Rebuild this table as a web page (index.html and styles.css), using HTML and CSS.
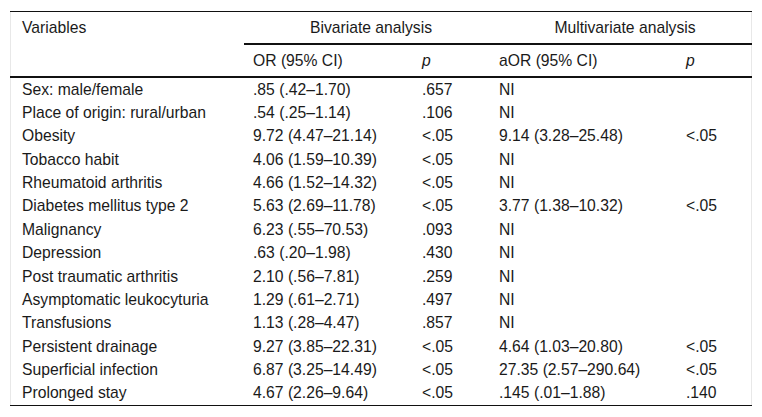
FILE: index.html
```html
<!DOCTYPE html>
<html lang="en">
<head>
<meta charset="utf-8">
<title>Table</title>
<link rel="stylesheet" href="styles.css">
</head>
<body>
<div class="wrap">
<table class="stats">
<colgroup>
<col class="c1"><col class="c2"><col class="c3"><col class="c4"><col class="c5">
</colgroup>
<thead>
<tr class="h1">
<th class="var" rowspan="2">Variables</th>
<th class="grp" colspan="2">Bivariate analysis</th>
<th class="grp" colspan="2">Multivariate analysis</th>
</tr>
<tr class="h2">
<th>OR (95% CI)</th>
<th><i>p</i></th>
<th class="pl">aOR (95% CI)</th>
<th class="pr"><i>p</i></th>
</tr>
</thead>
<tbody>
<tr><td>Sex: male/female</td><td>.85 (.42–1.70)</td><td>.657</td><td class="pl">NI</td><td class="pr"></td></tr>
<tr><td>Place of origin: rural/urban</td><td>.54 (.25–1.14)</td><td>.106</td><td class="pl">NI</td><td class="pr"></td></tr>
<tr><td>Obesity</td><td>9.72 (4.47–21.14)</td><td>&lt;.05</td><td class="pl">9.14 (3.28–25.48)</td><td class="pr">&lt;.05</td></tr>
<tr><td>Tobacco habit</td><td>4.06 (1.59–10.39)</td><td>&lt;.05</td><td class="pl">NI</td><td class="pr"></td></tr>
<tr><td>Rheumatoid arthritis</td><td>4.66 (1.52–14.32)</td><td>&lt;.05</td><td class="pl">NI</td><td class="pr"></td></tr>
<tr><td>Diabetes mellitus type 2</td><td>5.63 (2.69–11.78)</td><td>&lt;.05</td><td class="pl">3.77 (1.38–10.32)</td><td class="pr">&lt;.05</td></tr>
<tr><td>Malignancy</td><td>6.23 (.55–70.53)</td><td>.093</td><td class="pl">NI</td><td class="pr"></td></tr>
<tr><td>Depression</td><td>.63 (.20–1.98)</td><td>.430</td><td class="pl">NI</td><td class="pr"></td></tr>
<tr><td>Post traumatic arthritis</td><td>2.10 (.56–7.81)</td><td>.259</td><td class="pl">NI</td><td class="pr"></td></tr>
<tr><td>Asymptomatic leukocyturia</td><td>1.29 (.61–2.71)</td><td>.497</td><td class="pl">NI</td><td class="pr"></td></tr>
<tr><td>Transfusions</td><td>1.13 (.28–4.47)</td><td>.857</td><td class="pl">NI</td><td class="pr"></td></tr>
<tr><td>Persistent drainage</td><td>9.27 (3.85–22.31)</td><td>&lt;.05</td><td class="pl">4.64 (1.03–20.80)</td><td class="pr">&lt;.05</td></tr>
<tr><td>Superficial infection</td><td>6.87 (3.25–14.49)</td><td>&lt;.05</td><td class="pl">27.35 (2.57–290.64)</td><td class="pr">&lt;.05</td></tr>
<tr><td>Prolonged stay</td><td>4.67 (2.26–9.64)</td><td>&lt;.05</td><td class="pl">.145 (.01–1.88)</td><td class="pr">.140</td></tr>
</tbody>
</table>
</div>
</body>
</html>
```
FILE: styles.css
```css
html, body {
  margin: 0;
  padding: 0;
  background: #ffffff;
}

.wrap {
  margin: 11px 0 0 10px;
  width: 742px;
  box-sizing: border-box;
  border-left: 1px solid #e8e8e8;
  border-right: 1px solid #e8e8e8;
}

.stats {
  width: 742px;
  margin: 0 -1px;
  border-collapse: separate;
  border-spacing: 0;
  table-layout: fixed;
  font-family: "Liberation Sans", Arial, Helvetica, sans-serif;
  font-size: 15.7px;
  line-height: 18px;
  color: #1a1a1a;
  border-top: 1px solid #111111;
  border-bottom: 1px solid #111111;
}

.c1 { width: 234px; }
.c2 { width: 169px; }
.c3 { width: 76px; }
.c4 { width: 188px; }
.c5 { width: 75px; }

.stats th,
.stats td {
  padding: 0 0 0 9px;
  text-align: left;
  font-weight: normal;
  white-space: nowrap;
  vertical-align: middle;
}

.stats th.var,
.stats td:first-child {
  padding-left: 12px;
}

.stats td.pl,
.stats th.pl {
  padding-left: 10px;
}

.stats td.pr,
.stats th.pr {
  padding-left: 9px;
}

.h1 th {
  height: 31px;
}

.h1 th.var {
  vertical-align: top;
  padding-top: 7px;
  border-bottom: 2px solid #111111;
}

.h1 th.grp {
  text-align: center;
  border-bottom: 2px solid #111111;
}

.h2 th {
  height: 31px;
  border-bottom: 2px solid #111111;
}

.stats tbody tr {
  height: 23.36px;
}

.stats tbody td {
  height: 23.36px;
}
```
